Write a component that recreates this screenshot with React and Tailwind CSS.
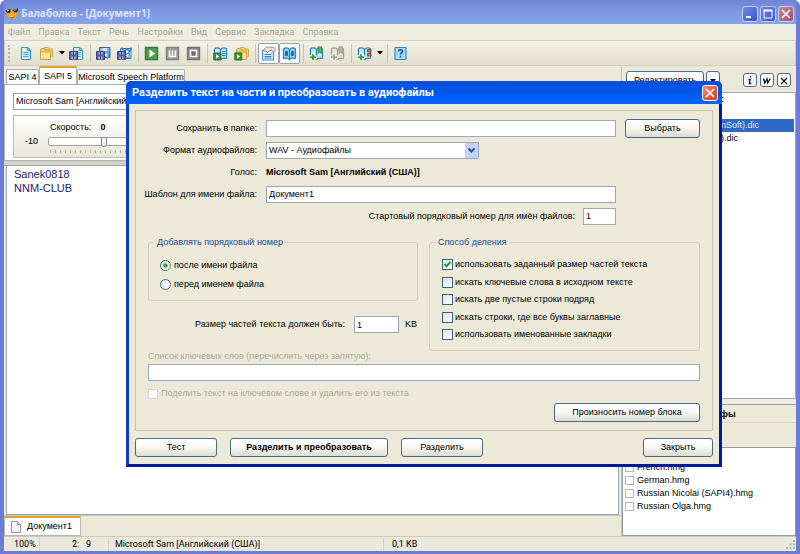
import React from "react";

/* ---------- toolbar glyphs ---------- */

function Svg({ children, size = 15 }) {
  return (
    <svg width={size} height={size} viewBox="0 0 15 15" aria-hidden="true" className="block shrink-0">
      {children}
    </svg>
  );
}

const Page = ({ x = 0 }) => (
  <g transform={`translate(${x} 0)`}>
    <path d="M4 1.500h5.500l3 3v8.500q0 .5-.5.5h-8q-.5 0-.5-.5v-11q0-.5.5-.5z" fill="#d6effa" stroke="#3a97c4" strokeWidth="1.200" />
    <path d="M9.500 1.500v3h3z" fill="#8ccbe8" stroke="#3a97c4" />
    <path d="M5.500 6.500h5M5.500 8.500h5M5.500 10.500h5" stroke="#4aa3d0" />
  </g>
);

const Folder = ({ x = 0 }) => (
  <g transform={`translate(${x} 0)`}>
    <path d="M5.500 4v-2.500h3.500l1 1.500h3.500v7.500h-2" fill="#f3d98a" stroke="#cfa548" />
    <path d="M1.500 12.500v-8.500l1-1.500h3l1 1.500h4.500v8.500z" fill="#f2d27a" stroke="#c89b3c" />
    <path d="M1.500 13.500v-7.500h10v7.500z" fill="#fae396" stroke="#cfa243" />
  </g>
);

const Floppy = () => (
  <g>
    <path d="M.5 5.500h8v8h-8z" fill="#5a62ae" stroke="#3c4288" />
    <path d="M2.500 6h4v2.500h-4zM2.500 10.500h4v3h-4z" fill="#a9b0dd" />
    <path d="M4.500 6v7" stroke="#3c4288" />
  </g>
);

const Book = ({ line = "#2a87b8", fill = "#c6e8f7" }) => (
  <g>
    <path
      d="M7.500 3.500C6.500 2 4 1.800 2.500 2.200q-1 .3-1 1.300v8q0 1 1 .8c2-.4 4-.2 5 1.200 1-1.400 3-1.600 5-1.200q1 .2 1-.8v-8q0-1-1-1.300c-1.500-.4-4-.2-5 1.300z"
      fill={fill}
      stroke={line}
      strokeWidth="1.300"
    />
    <path d="M7.500 3.500v10" stroke={line} strokeWidth="1.300" />
  </g>
);

const Plus = ({ color }) => (
  <g>
    <path d="M4 7.500v7.500M.3 11.200h7.400" stroke="#fff" strokeWidth="4" />
    <path d="M4 8.300v6M1 11.300h6" stroke={color} strokeWidth="2" />
  </g>
);

const PlayBadge = () => (
  <g>
    <path d="M.8 7h7v7h-7z" fill="#3f8f3a" stroke="#2b6b28" />
    <path d="M3 8.300l3.200 2.200L3 12.700z" fill="#fff" />
  </g>
);

const ICONS = {
  newDoc: <Page />,
  open: <Folder />,
  saveDoc: (
    <g>
      <Page x={1} />
      <Floppy />
    </g>
  ),
  saveAudio: (
    <g>
      <path d="M3.500 1.500h10.500v10h-10.500z" fill="#8fb4dc" stroke="#3a66a6" />
      <path d="M6.500 2h4.500v3h-4.500z" fill="#e4edfb" />
      <path d="M8 7.500h1.500l2.500-2v7l-2.500-2H8z" fill="#d6f2ff" stroke="#2586bd" />
      <path d="M13.200 6q1.500 2.500 0 5" fill="none" stroke="#2a7ed6" />
      <Floppy />
    </g>
  ),
  saveParts: (
    <g>
      <path d="M3.500 2.500h10.500v10h-10.500z" fill="#bfe2f5" stroke="#2c7fb3" />
      <path d="M4.500 1.500l3 4 2.500-3 2.500 3 2-4" fill="none" stroke="#3f7fc0" strokeWidth="1.300" />
      <path d="M8.500 8h1.500l2-1.500v6l-2-1.500H8.500z" fill="#fff" stroke="#2586bd" />
      <Floppy />
    </g>
  ),
  play: (
    <g>
      <path d="M1.500 1.500h12v12h-12z" fill="#55a04c" stroke="#357a33" strokeWidth="1.400" />
      <path d="M5.500 3.500l5.500 4-5.500 4z" fill="#fff" />
    </g>
  ),
  pause: (
    <g>
      <path d="M1.500 1.500h12v12h-12z" fill="#a09f9c" stroke="#7f7e7b" strokeWidth="1.400" />
      <path d="M4.500 4.500v6h6v-6M7.500 4.500v6" fill="none" stroke="#fff" strokeWidth="1.500" />
    </g>
  ),
  stop: (
    <g>
      <path d="M1.500 1.500h12v12h-12z" fill="#8d8c89" stroke="#74736f" strokeWidth="1.400" />
      <path d="M4.500 4.500h6v6h-6z" fill="#6b6a67" stroke="#fff" strokeWidth="1.600" />
    </g>
  ),
  bookPlay: (
    <g>
      <Book />
      <path d="M9 5.500h3.500M9 7.500h3.500M9 9.500h3.500" stroke="#2a87b8" />
      <PlayBadge />
    </g>
  ),
  folderPlay: (
    <g>
      <Folder x={1} />
      <PlayBadge />
    </g>
  ),
  options: (
    <g>
      <path d="M1.500 4.500h11v9.500h-11z" fill="#dbeefa" stroke="#4a93cc" strokeWidth="1.200" />
      <path d="M3.500 8.500h7M3.500 10.500h7M3.500 12h7" stroke="#3f86c8" />
      <path d="M2.500 3.500l3-2.300h7.500l1.200 1.300v2.500l-2 .7-1.700-1.500-2.500 1-1.500 1.300-1.500-1.500h-2z" fill="#e7dcd6" stroke="#8e817b" strokeWidth=".8" />
    </g>
  ),
  dict: (
    <g>
      <Book fill="#8fd0ef" />
      <path d="M3.500 5.500h2v4h-2zM9.500 5.500h2v4h-2z" fill="#1f78b4" stroke="#1a6ba5" />
    </g>
  ),
  bookmarkAdd: (
    <g>
      <Book />
      <path d="M9 .8h3.500v6.700l-1.700-1.500L9 7.500z" fill="#4fb04a" stroke="#2b8a30" strokeWidth=".7" />
      <Plus color="#3aa236" />
    </g>
  ),
  bookmarkOff: (
    <g>
      <Book line="#a09f99" fill="#e6e4da" />
      <path d="M9 .8h3.500v6.700l-1.700-1.500L9 7.500z" fill="#b3b2ac" stroke="#93928c" strokeWidth=".7" />
      <Plus color="#a5a49e" />
    </g>
  ),
  bookmarkList: (
    <g>
      <Book />
      <path d="M10.500 3.500h3.500v2.500h-3.500zM10.500 7.500h3.500v2.500h-3.500z" fill="#c07a68" stroke="#7d4238" strokeWidth=".8" />
      <Plus color="#3aa236" />
    </g>
  ),
  help: (
    <g>
      <path d="M2.500 1.500h10q.5 0 .5.5v11q0 .5-.5.5h-10q-.5 0-.5-.5V2q0-.5.5-.5z" fill="#a9dcf5" stroke="#3a86b8" strokeWidth="1.200" />
      <path d="M5.500 5.500c0-2.300 4-2.300 4 0 0 1.300-2 1.300-2 3M7.500 9.800v1.600" fill="none" stroke="#1b4f9c" strokeWidth="1.500" />
    </g>
  ),
};

const TOOLBAR = [
  { icon: "newDoc", label: "Создать" },
  { icon: "open", label: "Открыть", menu: true },
  { icon: "saveDoc", label: "Сохранить" },
  null,
  { icon: "saveAudio", label: "Сохранить аудиофайл" },
  { icon: "saveParts", label: "Разделить на аудиофайлы" },
  null,
  { icon: "play", label: "Читать вслух" },
  { icon: "pause", label: "Пауза" },
  { icon: "stop", label: "Стоп" },
  null,
  { icon: "bookPlay", label: "Читать выделенное" },
  { icon: "folderPlay", label: "Читать из буфера" },
  null,
  { icon: "options", label: "Панель свойств", on: true },
  { icon: "dict", label: "Панель словарей", on: true },
  null,
  { icon: "bookmarkAdd", label: "Добавить закладку" },
  { icon: "bookmarkOff", label: "Удалить закладку" },
  null,
  { icon: "bookmarkList", label: "Закладки", menu: true },
  null,
  { icon: "help", label: "Справка" },
];

const MENU = ["Файл", "Правка", "Текст", "Речь", "Настройки", "Вид", "Сервис", "Закладка", "Справка"];

const METHODS = [
  "использовать заданный размер частей текста",
  "искать ключевые слова в исходном тексте",
  "искать две пустые строки подряд",
  "искать строки, где все буквы заглавные",
  "использовать именованные закладки",
];

const HOMOGRAPHS = ["French.hmg", "German.hmg", "Russian Nicolai (SAPI4).hmg", "Russian Olga.hmg"];

/* ---------- small controls ---------- */

function Push({ children, className = "" }) {
  return (
    <button
      type="button"
      className={`flex h-[19px] items-center justify-center rounded-[3px] border border-[#4a6b85] bg-linear-to-b from-white via-[#f6f6f2] to-[#dedccf] whitespace-nowrap ${className}`}
    >
      {children}
    </button>
  );
}

function Box({ className = "", ...props }) {
  return (
    <input
      type="text"
      className={`h-[17px] min-w-0 border border-[#9aa9b4] bg-white px-[2px] outline-none ${className}`}
      {...props}
    />
  );
}

function Tick({ label, checked = false }) {
  return (
    <label className="flex items-center gap-[2px] whitespace-nowrap">
      <span className="relative block size-[11px] shrink-0">
        <input
          type="checkbox"
          defaultChecked={checked}
          className="peer block size-[11px] appearance-none border border-[#3f6180] bg-linear-to-br from-[#dce4e4] to-white"
        />
        <svg viewBox="0 0 11 11" className="pointer-events-none absolute inset-0 hidden size-[11px] peer-checked:block" aria-hidden="true">
          <path d="M2.500 5l2 2.200L8.500 3" fill="none" stroke="#21a121" strokeWidth="2" />
        </svg>
      </span>
      {label}
    </label>
  );
}

function Radio({ label, checked = false }) {
  return (
    <label className="flex items-center gap-[3px] whitespace-nowrap">
      <span className="relative block size-[11px] shrink-0">
        <input
          type="radio"
          name="numberPlace"
          defaultChecked={checked}
          className="peer block size-[11px] appearance-none rounded-full border border-[#4a6a80] bg-linear-to-br from-[#e4e4de] to-white"
        />
        <svg viewBox="0 0 11 11" className="pointer-events-none absolute inset-0 hidden size-[11px] peer-checked:block" aria-hidden="true">
          <circle cx="5.500" cy="5.500" r="2.200" fill="#2fa52f" />
        </svg>
      </span>
      {label}
    </label>
  );
}

function Caret() {
  return (
    <svg width="6" height="4" viewBox="0 0 6 4" aria-hidden="true">
      <path d="M0 0h6L3 3.500z" fill="#000" />
    </svg>
  );
}

function CaptionButton({ label, red, children }) {
  return (
    <button
      type="button"
      aria-label={label}
      className={`flex size-4 items-center justify-center rounded-[3px] border border-[#c3cdf3] ${
        red ? "bg-linear-to-br from-[#c28a9c] to-[#a3506a]" : "bg-linear-to-br from-[#6f87e4] to-[#3b56c9]"
      }`}
    >
      <svg width="12" height="12" viewBox="0 0 12 12" aria-hidden="true" fill="none" stroke="#fff">
        {children}
      </svg>
    </button>
  );
}

/* ---------- main window ---------- */

function TitleBar() {
  return (
    <header className="flex h-6 items-center bg-linear-to-b from-[#6f84d6] via-[#7f99e2] to-[#86a4ea] pt-[3px] pr-[2px] pl-[1px]">
      <svg width="14" height="14" viewBox="0 0 14 14" aria-hidden="true">
        <ellipse cx="7" cy="7.500" rx="5" ry="5" fill="#f0a81c" />
        <path d="M.5 3.500l5-1.500v3c-1.700 1.500-4 1.200-5-1.500zM7.500 3l5.500-1.500c.3 2.500-1 4-3.500 4z" fill="#1c1406" />
        <path d="M2 4l2-.7M9.500 3.500l2-.8" stroke="#e9e5d0" />
        <path d="M3.500 8.500c2 2 5 1.500 6.500-.8-.5 4.500-5 5-6.500.8z" fill="#b03a14" />
        <path d="M4.300 9.200c1.700 1 3.600.8 5-.5" fill="none" stroke="#fff" strokeWidth=".8" />
      </svg>
      <h1 className="ml-[2px] flex-1 font-['Open_Sans',sans-serif] text-[10px] font-bold whitespace-nowrap text-[#dce4fb]">
        Балаболка - [Документ1]
      </h1>
      <div className="flex gap-[2px]">
        <CaptionButton label="Свернуть">
          <path d="M2 9h5" strokeWidth="2" />
        </CaptionButton>
        <CaptionButton label="Развернуть">
          <path d="M2 2.500h8v7.500H2z" />
          <path d="M1.500 2.500h9" strokeWidth="2" />
        </CaptionButton>
        <CaptionButton label="Закрыть окно" red>
          <path d="M2 2l8 8M10 2l-8 8" strokeWidth="1.600" />
        </CaptionButton>
      </div>
    </header>
  );
}

function Toolbar() {
  return (
    <div className="flex h-[26px] items-center border border-[#cfccbb] border-t-[#d5d2c2] bg-linear-to-b from-[#f3f1e6] to-[#e2dfce] pl-[3px]">
      <div className="mr-[4px] h-[17px] w-[3px] border-l-2 border-dotted border-[#b5b2a2]" />
      {TOOLBAR.map((item, i) =>
        item === null ? (
          <div key={i} className="flex w-[6px] justify-center">
            <div className="h-[19px] w-px bg-[#c6c3b3]" />
          </div>
        ) : (
          <React.Fragment key={i}>
            <button
              type="button"
              aria-label={item.label}
              className={`flex h-[21px] w-[21px] items-center justify-center rounded-[2px] ${
                item.on ? "border border-[#93a5b5] bg-[#fbfbf8]" : ""
              }`}
            >
              <Svg>{ICONS[item.icon]}</Svg>
            </button>
            {item.menu && (
              <button type="button" aria-label={`${item.label}: меню`} className="flex h-[21px] w-[9px] items-center justify-center">
                <Caret />
              </button>
            )}
          </React.Fragment>
        )
      )}
    </div>
  );
}

function VoicePanel() {
  return (
    <section className="flex flex-col">
      <div className="flex h-[18px] items-end pl-[2px]">
        <button type="button" className="h-[15px] w-[33px] rounded-t-[2px] border border-b-0 border-[#a9b1ad] bg-[#f8f8f4] leading-[14px] whitespace-nowrap">
          SAPI 4
        </button>
        <button type="button" className="h-[18px] w-[38px] rounded-t-[2px] border border-t-2 border-b-0 border-[#a9b1ad] border-t-[#e8a030] bg-white leading-[13px] whitespace-nowrap">
          SAPI 5
        </button>
        <button type="button" className="h-[15px] w-[108px] rounded-t-[2px] border border-b-0 border-[#a9b1ad] bg-[#f8f8f4] leading-[14px] whitespace-nowrap">
          Microsoft Speech Platform
        </button>
      </div>
      <div className="flex h-[77px] flex-col gap-[5px] border border-[#a9b1ad] bg-[#fdfdfb] pt-[8px] pr-3 pl-[8px]">
        <select
          aria-label="Голос"
          className="h-[17px] w-[300px] shrink-0 appearance-none border border-[#93a1ab] bg-white px-[2px]"
        >
          <option>Microsoft Sam [Английский (США)]</option>
        </select>
        <div className="flex h-[43px] flex-col border border-[#b9bcb3] bg-linear-to-b from-white to-[#e9e6d8] pt-[5px]">
          <label htmlFor="speed" className="flex gap-[9px] pl-[36px] leading-[13px]">
            Скорость: <b>0</b>
          </label>
          <div className="flex items-start gap-[10px] pl-[11px]">
            <span className="pt-[1px] leading-[13px]">-10</span>
            <div className="flex flex-col">
              <input
                id="speed"
                type="range"
                min="-10"
                max="10"
                defaultValue="0"
                className="mt-[3px] h-[9px] w-[112px] appearance-none rounded-[2px] border border-[#a5a79d] bg-white [&::-webkit-slider-thumb]:h-[10px] [&::-webkit-slider-thumb]:w-[6px] [&::-webkit-slider-thumb]:appearance-none [&::-webkit-slider-thumb]:rounded-b-[3px] [&::-webkit-slider-thumb]:border [&::-webkit-slider-thumb]:border-[#6f8f83] [&::-webkit-slider-thumb]:bg-[#eef2ec]"
              />
              <div className="mt-[4px] ml-[2px] h-[3px] bg-[repeating-linear-gradient(to_right,#a8a89e_0_1px,transparent_1px_5px)]" />
            </div>
          </div>
        </div>
      </div>
    </section>
  );
}

function LeftPane() {
  return (
    <main className="flex min-w-0 flex-1 flex-col">
      <VoicePanel />
      <div className="h-[5px] border-b border-[#9aa3a8] bg-[#d4d2c6]" />
      <div className="mx-[2px] flex flex-1 border border-t-0 border-[#9aa9b4]">
        <textarea
          aria-label="Текст документа"
          spellCheck={false}
          defaultValue={"Sanek0818\nNNM-CLUB"}
          className="block w-full resize-none bg-white px-[7px] pt-[1px] text-[11px] leading-[14px] text-[#1e1c6b] outline-none"
        />
      </div>
      <div className="flex h-[21px] items-start border-t border-[#c5c4b6]">
        <button
          type="button"
          className="flex h-5 w-[77px] items-center gap-[6px] border border-t-2 border-[#b7b9ae] border-t-[#e8a030] bg-white pl-[6px] whitespace-nowrap"
        >
          <svg width="10" height="12" viewBox="0 0 10 12" aria-hidden="true">
            <path d="M.5.5h6l3 3v8H.5z" fill="#f6f6f4" stroke="#9a9a9a" />
            <path d="M6.500.5v3h3" fill="none" stroke="#9a9a9a" />
          </svg>
          Документ1
        </button>
      </div>
    </main>
  );
}

const ROUND_BUTTONS = [
  { label: "Информация", shape: <path d="M6.500 2v1.500M4.500 5.500h1.700L5.300 9.500h2" /> },
  { label: "Слово", shape: <path d="M2.500 4.500L3.700 9l2.300-4 .7 4 2.600-4.500" /> },
  { label: "Закрыть панель", shape: <path d="M3 4l6 6M9 4l-6 6" /> },
];

function RightPane() {
  return (
    <aside className="flex w-[175px] shrink-0 flex-col border-l border-[#c5c4b6]">
      <div className="flex h-[26px] items-start justify-between pt-[5px] pr-[5px] pl-[4px]">
        <div className="flex gap-[2px]">
          <Push className="w-[78px]">Редактировать</Push>
          <button type="button" aria-label="Меню правки" className="flex h-[19px] w-[14px] items-center justify-center rounded-[3px] border border-[#4a6b85] bg-white">
            <Caret />
          </button>
        </div>
        <div className="flex gap-[3px] pt-[2px]">
          {ROUND_BUTTONS.map((b) => (
            <button key={b.label} type="button" aria-label={b.label} className="size-[14px] rounded-[3px] border border-[#4a6b85] bg-white">
              <svg viewBox="0 0 12 12" className="size-[12px]" fill="none" stroke="#111" strokeWidth="1.300" aria-hidden="true">
                {b.shape}
              </svg>
            </button>
          ))}
        </div>
      </div>
      <div className="flex-1 border border-[#9aa9b4] bg-white pr-[1px] leading-[13px]">
        <p className="h-[13px] pl-[98px] font-bold">:</p>
        <p className="h-[13px]" />
        <p className="h-[13px] bg-[#316ac5] pl-[98px] text-[#dfe8f8]">nSoft).dic</p>
        <p className="h-[13px] pl-[98px]">).dic</p>
      </div>
      <div className="h-[6px] border-b border-[#9aa3a8] bg-[#efede2]" />
      <h2 className="h-[18px] border-b border-[#dad7c8] pl-[98px] leading-[18px] font-bold">фы</h2>
      <div className="h-6 shrink-0" />
      <div className="h-[89px] border border-[#8f9ba3] bg-white pt-[13px] pl-[2px]">
        {HOMOGRAPHS.map((name) => (
          <label key={name} className="flex h-[13px] items-center gap-[3px] whitespace-nowrap">
            <input type="checkbox" className="size-[9px] appearance-none border border-[#b4b8b4] bg-white" />
            {name}
          </label>
        ))}
      </div>
    </aside>
  );
}

function StatusBar() {
  return (
    <footer className="flex h-[15px] items-center border-t border-[#cbc9bb] bg-[#ebe9dc] font-['Roboto',sans-serif] text-[9px] whitespace-nowrap">
      <span className="w-[36px] border-r border-[#d3d0c0] pl-[10px]">100%</span>
      <span className="w-[69px] border-r border-[#d3d0c0] pl-[32px]">2:&nbsp;&nbsp;&nbsp;9</span>
      <span className="w-[275px] border-r border-[#d3d0c0] pl-[6px]">Microsoft Sam [Английский (США)]</span>
      <span className="pl-[8px]">0,1 KB</span>
      <svg width="11" height="11" viewBox="0 0 11 11" className="ml-auto" aria-hidden="true">
        <path d="M8 1h2v2H8zM8 4.500h2v2H8zM8 8h2v2H8zM4.500 4.500h2v2h-2zM4.500 8h2v2h-2zM1 8h2v2H1z" fill="#b8b4a3" />
      </svg>
    </footer>
  );
}

/* ---------- dialog ---------- */

function SplitDialog() {
  return (
    <div
      role="dialog"
      aria-labelledby="dialog-title"
      className="absolute top-[81px] left-[122px] w-[596px] rounded-t-[6px] border-[3px] border-t-0 border-[#0f3fc4] border-r-[#00199c] border-b-[#00199c] bg-[#ece9d8]"
    >
      <div className="-mx-[3px] flex h-[23px] items-center rounded-t-[5px] bg-linear-to-b from-[#0a4fd8] via-[#0058ee] to-[#0466fb] pr-[4px] pl-[6px]">
        <h2 id="dialog-title" className="flex-1 font-['Roboto',sans-serif] text-[11px] font-bold whitespace-nowrap text-white">
          Разделить текст на части и преобразовать в аудиофайлы
        </h2>
        <button
          type="button"
          aria-label="Закрыть диалог"
          className="flex size-4 items-center justify-center rounded-[3px] border border-white bg-linear-to-br from-[#f0896a] to-[#cc3a12]"
        >
          <svg width="10" height="10" viewBox="0 0 10 10" aria-hidden="true">
            <path d="M1 1l8 8M9 1L1 9" stroke="#fff" strokeWidth="1.700" />
          </svg>
        </button>
      </div>

      <form className="flex flex-col gap-[7px] px-[6px] pt-[6px] pb-[7px]" onSubmit={(e) => e.preventDefault()}>
        <div className="flex flex-col border border-[#c4c1b1] px-[12px] pt-[6px] pb-[8px]">
          <div className="grid auto-rows-[22px] grid-cols-[109px_350px_1fr] items-center gap-x-[9px] whitespace-nowrap">
            <label htmlFor="folder" className="justify-self-end">Сохранить в папке:</label>
            <Box id="folder" />
            <Push>Выбрать</Push>

            <label htmlFor="format" className="justify-self-end">Формат аудиофайлов:</label>
            <div className="relative col-span-2 w-[213px]">
              <select id="format" className="block h-[17px] w-full appearance-none border border-[#9aa9b4] bg-white px-[2px]">
                <option>WAV - Аудиофайлы</option>
              </select>
              <svg width="13" height="15" viewBox="0 0 13 15" className="pointer-events-none absolute top-px right-px" aria-hidden="true">
                <rect width="13" height="15" rx="1" fill="#c3d3fd" />
                <path d="M3.500 5.500l3 3 3-3" fill="none" stroke="#34507e" strokeWidth="2" />
              </svg>
            </div>

            <span className="justify-self-end">Голос:</span>
            <b className="col-span-2">Microsoft Sam [Английский (США)]</b>

            <label htmlFor="pattern" className="justify-self-end">Шаблон для имени файла:</label>
            <Box id="pattern" defaultValue="Документ1" />
            <span />

            <div className="col-span-2 flex items-center justify-end gap-[8px]">
              <label htmlFor="start">Стартовый порядковый номер для имён файлов:</label>
              <Box id="start" defaultValue="1" className="w-[33px]" />
            </div>
          </div>

          <div className="mt-[9px] flex gap-[11px]">
            <div className="flex w-[270px] flex-col">
              <fieldset className="flex h-[65px] flex-col gap-[6px] rounded-[3px] border border-[#d3d0bf] px-[11px] pt-[11px]">
                <legend className="-ml-[5px] h-3 px-[2px] leading-3 text-[#1f4a9c]">Добавлять порядковый номер</legend>
                <Radio label="после имени файла" checked />
                <Radio label="перед именем файла" />
              </fieldset>
              <div className="mt-[15px] flex items-center justify-end gap-[6px] pr-[1px] whitespace-nowrap">
                <label htmlFor="size" className="mr-[3px]">Размер частей текста должен быть:</label>
                <Box id="size" defaultValue="1" className="w-[45px]" />
                <span>KB</span>
              </div>
            </div>
            <fieldset className="flex h-[115px] flex-1 flex-col rounded-[3px] border border-[#d3d0bf] px-[12px] pt-[10px]">
              <legend className="-ml-[6px] h-3 px-[2px] leading-3 text-[#1f4a9c]">Способ деления</legend>
              <div className="flex h-[83px] flex-col justify-between leading-[13px]">
                {METHODS.map((m, i) => (
                  <Tick key={m} label={m} checked={i === 0} />
                ))}
              </div>
            </fieldset>
          </div>

          <label htmlFor="keywords" className="h-[13px] leading-[11px] text-[#aca899]">
            Список ключевых слов (перечислить через запятую):
          </label>
          <Box id="keywords" />
          <label className="mt-[6px] flex items-center gap-[3px] text-[#aca899]">
            <input type="checkbox" disabled className="size-[10px] appearance-none border border-[#d8d5c6] bg-white" />
            Поделить текст на ключевом слове и удалить его из текста
          </label>
          <Push className="mt-[3px] w-[146px] self-end">Произносить номер блока</Push>
        </div>

        <div className="flex gap-[13px]">
          <Push className="w-[82px]">Тест</Push>
          <Push className="w-[158px] font-bold">Разделить и преобразовать</Push>
          <Push className="w-[82px]">Разделить</Push>
          <Push className="ml-auto w-[70px]">Закрыть</Push>
        </div>
      </form>
    </div>
  );
}

export default function App() {
  return (
    <div className="relative flex min-h-screen flex-col rounded-t-[6px] border-x-[4px] border-b-[3px] border-[#6b7bd6] bg-[#ece9d8] font-['Liberation_Sans',sans-serif] text-[9px] leading-[13px] text-black">
      <TitleBar />
      <nav className="flex h-4 items-center gap-[8px] bg-[#efede0] pl-[4px] font-['Roboto',sans-serif] text-[#a9a695]">
        {MENU.map((m) => (
          <button key={m} type="button">
            {m}
          </button>
        ))}
      </nav>
      <Toolbar />
      <div className="flex flex-1">
        <LeftPane />
        <RightPane />
      </div>
      <StatusBar />
      <SplitDialog />
    </div>
  );
}
